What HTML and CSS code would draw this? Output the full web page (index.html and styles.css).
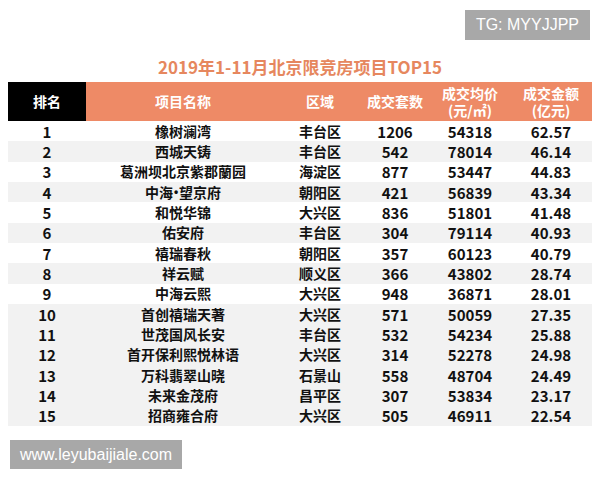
FILE: index.html
```html
<!DOCTYPE html>
<html lang="zh">
<head>
<meta charset="utf-8">
<title>2019年1-11月北京限竞房项目TOP15</title>
<link rel="stylesheet" href="styles.css">
</head>
<body>
<div class="top"><span class="badge">TG: MYYJJPP</span></div>
<h1 class="title">2019年1-11月北京限竞房项目TOP15</h1>
<div class="table">
  <div class="row head">
    <div class="cell rank">排名</div>
    <div class="cell">项目名称</div>
    <div class="cell">区域</div>
    <div class="cell">成交套数</div>
    <div class="cell two"><span>成交均价</span><span>(元/㎡)</span></div>
    <div class="cell two"><span>成交金额</span><span>(亿元)</span></div>
  </div>
  <div class="row"><div class="cell num">1</div><div class="cell">橡树澜湾</div><div class="cell">丰台区</div><div class="cell num">1206</div><div class="cell num">54318</div><div class="cell num">62.57</div></div>
  <div class="row alt"><div class="cell num">2</div><div class="cell">西城天铸</div><div class="cell">丰台区</div><div class="cell num">542</div><div class="cell num">78014</div><div class="cell num">46.14</div></div>
  <div class="row"><div class="cell num">3</div><div class="cell">葛洲坝北京紫郡蘭园</div><div class="cell">海淀区</div><div class="cell num">877</div><div class="cell num">53447</div><div class="cell num">44.83</div></div>
  <div class="row alt"><div class="cell num">4</div><div class="cell">中海<span class="dot">•</span>望京府</div><div class="cell">朝阳区</div><div class="cell num">421</div><div class="cell num">56839</div><div class="cell num">43.34</div></div>
  <div class="row"><div class="cell num">5</div><div class="cell">和悦华锦</div><div class="cell">大兴区</div><div class="cell num">836</div><div class="cell num">51801</div><div class="cell num">41.48</div></div>
  <div class="row alt"><div class="cell num">6</div><div class="cell">佑安府</div><div class="cell">丰台区</div><div class="cell num">304</div><div class="cell num">79114</div><div class="cell num">40.93</div></div>
  <div class="row"><div class="cell num">7</div><div class="cell">禧瑞春秋</div><div class="cell">朝阳区</div><div class="cell num">357</div><div class="cell num">60123</div><div class="cell num">40.79</div></div>
  <div class="row alt"><div class="cell num">8</div><div class="cell">祥云赋</div><div class="cell">顺义区</div><div class="cell num">366</div><div class="cell num">43802</div><div class="cell num">28.74</div></div>
  <div class="row"><div class="cell num">9</div><div class="cell">中海云熙</div><div class="cell">大兴区</div><div class="cell num">948</div><div class="cell num">36871</div><div class="cell num">28.01</div></div>
  <div class="row alt"><div class="cell num">10</div><div class="cell">首创禧瑞天著</div><div class="cell">大兴区</div><div class="cell num">571</div><div class="cell num">50059</div><div class="cell num">27.35</div></div>
  <div class="row alt"><div class="cell num">11</div><div class="cell">世茂国风长安</div><div class="cell">丰台区</div><div class="cell num">532</div><div class="cell num">54234</div><div class="cell num">25.88</div></div>
  <div class="row alt"><div class="cell num">12</div><div class="cell">首开保利熙悦林语</div><div class="cell">大兴区</div><div class="cell num">314</div><div class="cell num">52278</div><div class="cell num">24.98</div></div>
  <div class="row alt"><div class="cell num">13</div><div class="cell">万科翡翠山晓</div><div class="cell">石景山</div><div class="cell num">558</div><div class="cell num">48704</div><div class="cell num">24.49</div></div>
  <div class="row alt"><div class="cell num">14</div><div class="cell">未来金茂府</div><div class="cell">昌平区</div><div class="cell num">307</div><div class="cell num">53834</div><div class="cell num">23.17</div></div>
  <div class="row alt"><div class="cell num">15</div><div class="cell">招商雍合府</div><div class="cell">大兴区</div><div class="cell num">505</div><div class="cell num">46911</div><div class="cell num">22.54</div></div>
</div>
<div class="foot"><span class="badge wm">www.leyubaijiale.com</span></div>
</body>
</html>
```

FILE: styles.css
```css
html, body {
  margin: 0;
  padding: 0;
  background: #ffffff;
}
body {
  width: 600px;
  height: 480px;
  overflow: hidden;
  font-family: "Noto Sans CJK SC", "Noto Sans", sans-serif;
}
.top {
  display: flex;
  justify-content: flex-end;
  padding: 10px 10px 0 0;
}
.badge {
  display: inline-block;
  background: #a8a8a8;
  color: #ffffff;
  font-family: "Liberation Sans", Arial, sans-serif;
  font-size: 16px;
  height: 30px;
  line-height: 30px;
  padding: 0 11px;
}
.title {
  margin: 16px 0 5px 0;
  text-align: center;
  font-size: 17px;
  line-height: 21px;
  font-weight: 700;
  color: #e6875e;
}
.table {
  margin: 0 8px;
  width: 584px;
}
.row {
  display: grid;
  grid-template-columns: 78px 194px 80px 70px 80px 82px;
  height: 20.33px;
  background: #ffffff;
}
.row.alt {
  background: #f2f2f2;
}
.cell {
  display: flex;
  align-items: center;
  justify-content: center;
  text-align: center;
  font-size: 14px;
  font-weight: 700;
  color: #111111;
  white-space: nowrap;
  line-height: 17px;
}
.cell.num {
  font-size: 15px;
}
.dot {
  font-family: "Liberation Sans", Arial, sans-serif;
  font-size: 12px;
  padding: 0 1px;
}
.row.head {
  height: 39px;
  background: #ee8a66;
}
.row.head .cell {
  color: #ffffff;
  font-size: 14px;
}
.row.head .rank {
  background: #000000;
}
.row.head .two {
  flex-direction: column;
  line-height: 17px;
}
.row.head .two span {
  display: block;
  height: 17px;
}
.foot {
  padding: 14px 0 0 10px;
}
.wm {
  height: 29px;
  line-height: 29px;
  padding: 0 10px;
}
```
